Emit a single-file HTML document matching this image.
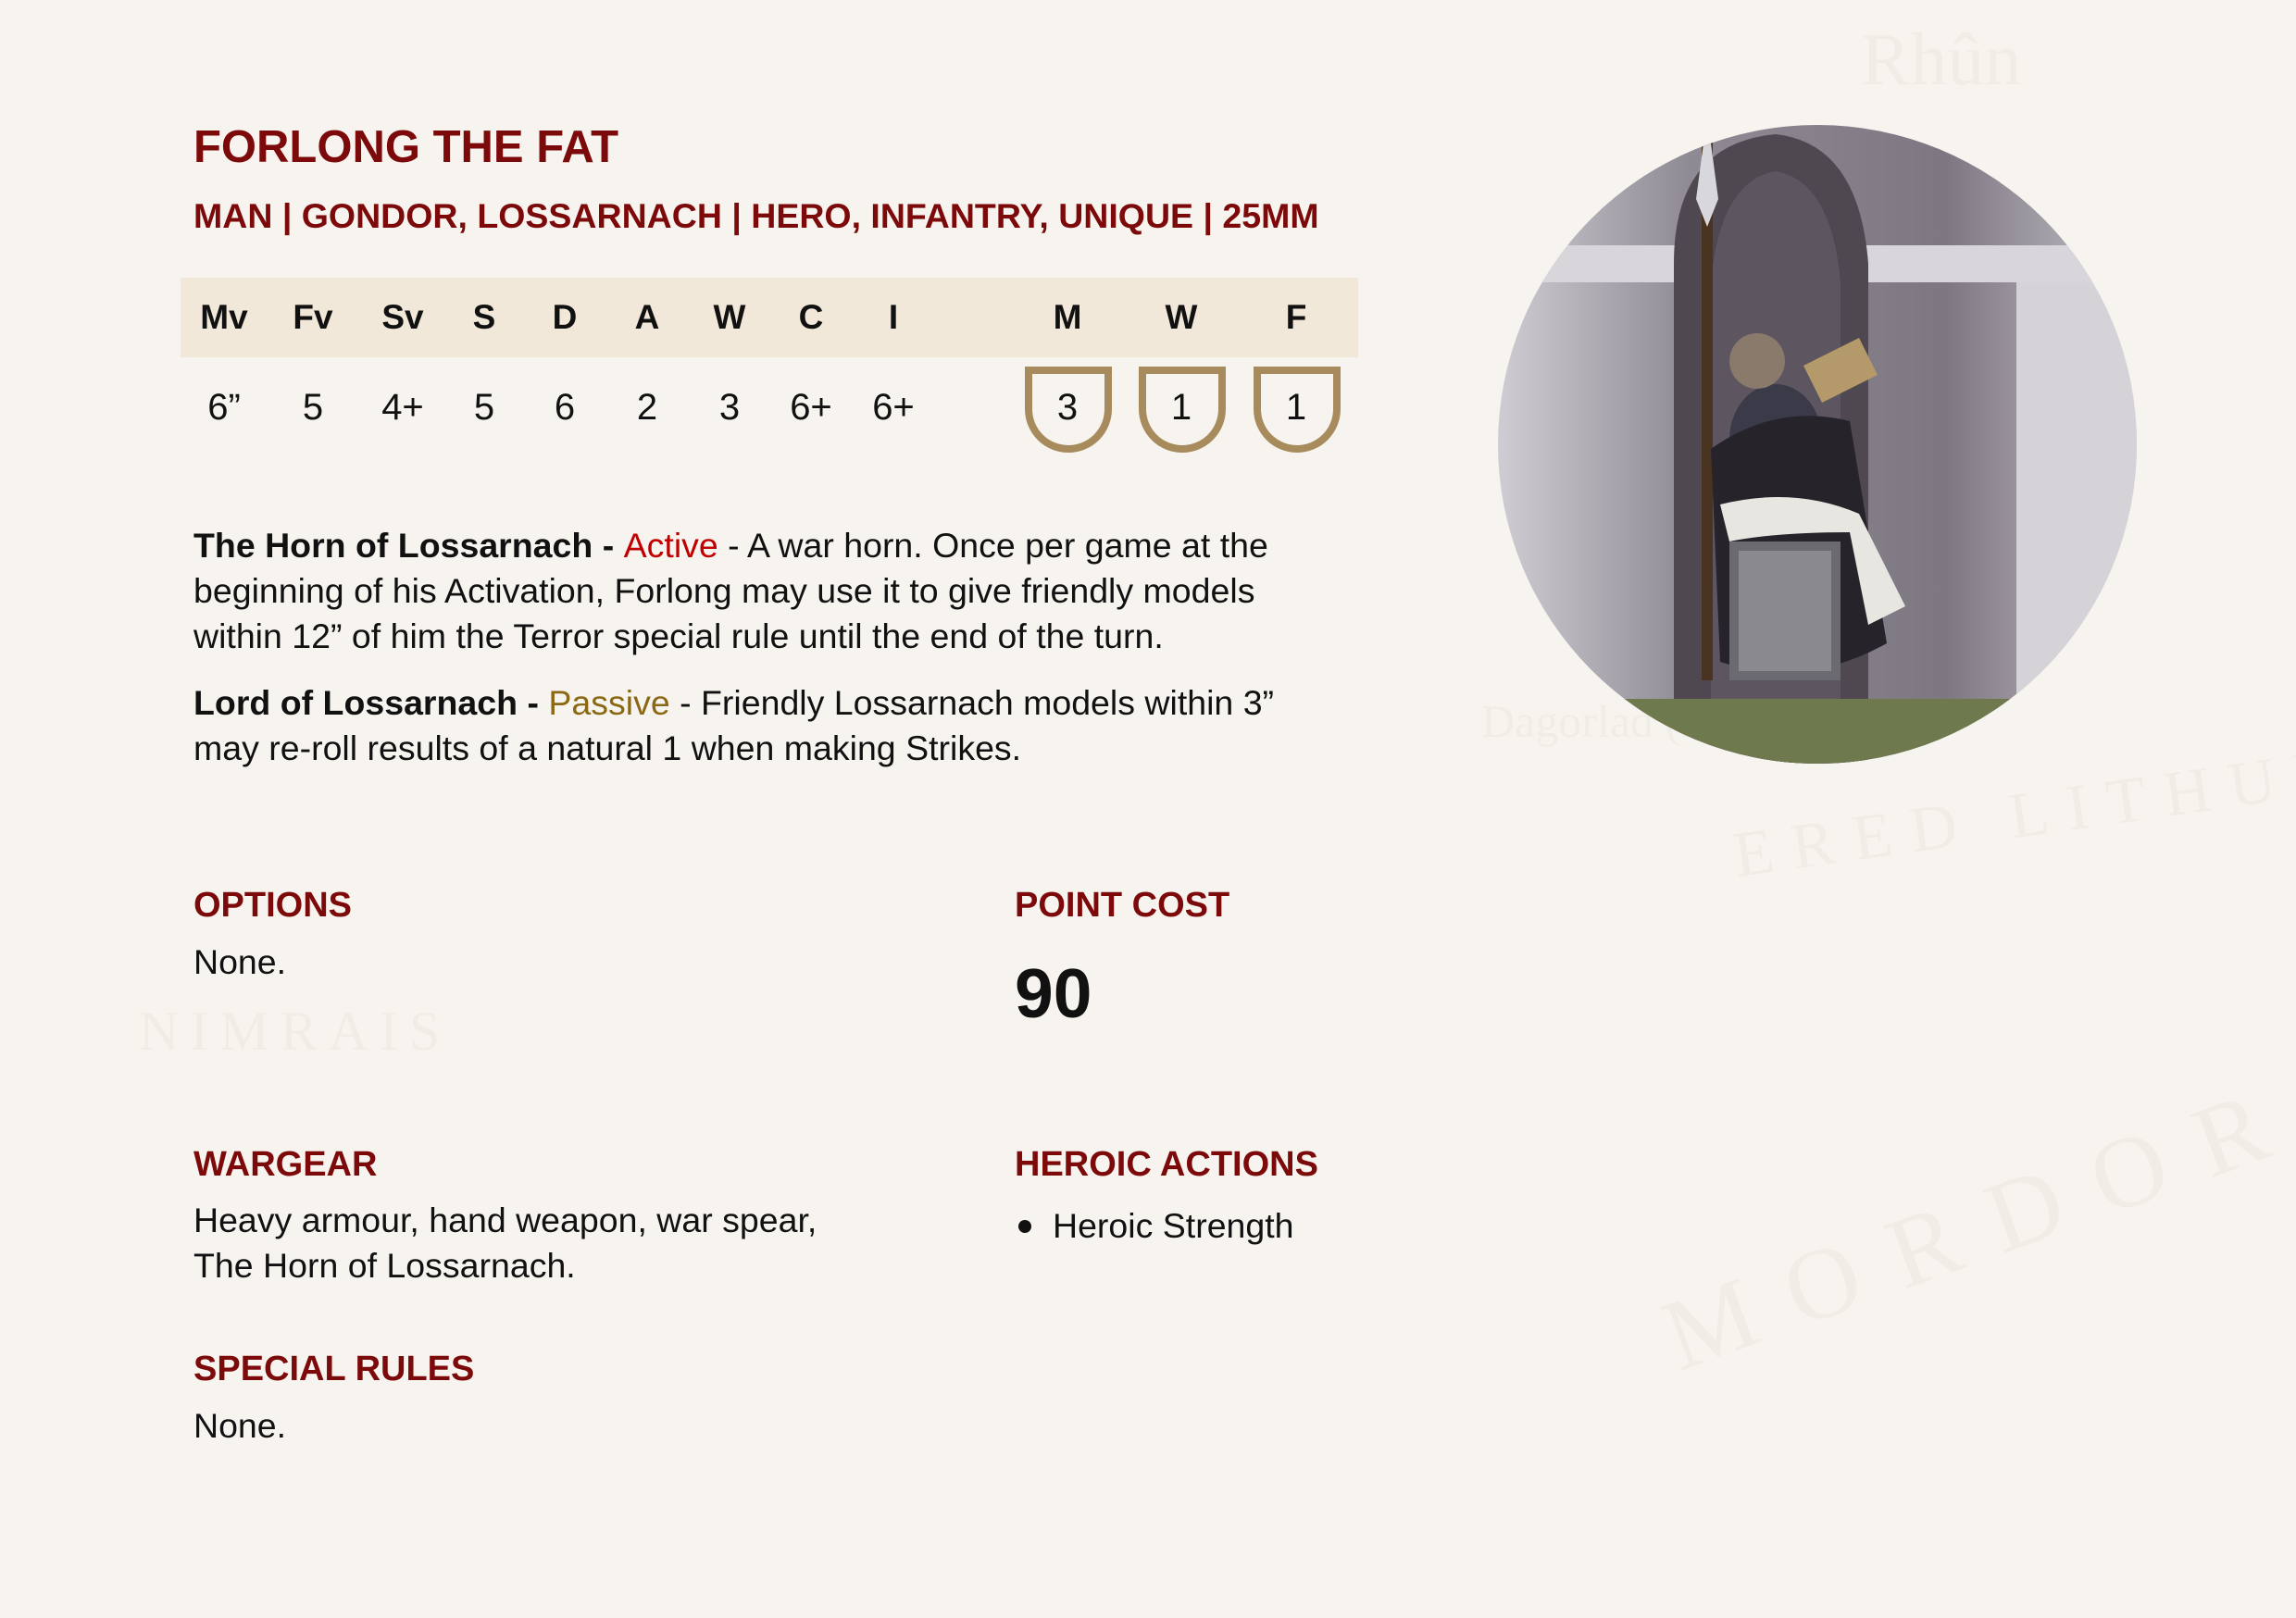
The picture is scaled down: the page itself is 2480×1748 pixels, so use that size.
<!DOCTYPE html>
<html><head><meta charset="utf-8"><style>
html,body{margin:0;padding:0}
body{width:2480px;height:1748px;background:#f7f4ef;position:relative;overflow:hidden;font-family:"Liberation Sans",Arial,sans-serif;color:#111}
.a{position:absolute;white-space:nowrap;line-height:1.15}
.h{color:#7d0a0a;font-weight:bold;font-size:38px}
.b{font-size:37.5px}
.hd{position:absolute;top:322px;font-size:37px;font-weight:bold;width:120px;text-align:center;margin-left:-60px;line-height:1.15}
.v{position:absolute;top:417px;font-size:40px;width:120px;text-align:center;margin-left:-60px;line-height:1.15}
.map{position:absolute;color:rgba(120,100,80,0.05);font-family:"Liberation Serif",serif;white-space:nowrap}
</style></head><body>
<div class="map" style="left:2010px;top:20px;font-size:80px">Rhûn</div>
<div class="map" style="left:1870px;top:840px;font-size:70px;letter-spacing:20px;transform:rotate(-8deg)">ERED LITHUI</div>
<div class="map" style="left:1780px;top:1260px;font-size:110px;letter-spacing:40px;transform:rotate(-20deg)">MORDOR</div>
<div class="map" style="left:150px;top:1080px;font-size:60px;letter-spacing:12px">NIMRAIS</div>
<div class="map" style="left:1600px;top:750px;font-size:50px">Dagorlad (Battle Plain)</div>

<div class="a" style="left:209px;top:131px;font-size:49px;font-weight:bold;color:#7d0a0a">FORLONG THE FAT</div>
<div class="a" style="left:209px;top:212px;font-size:37.5px;font-weight:bold;color:#7d0a0a">MAN | GONDOR, LOSSARNACH | HERO, INFANTRY, UNIQUE | 25MM</div>

<div style="position:absolute;left:195px;top:300px;width:1272px;height:86px;background:#f2e8da"></div>
<div class="hd" style="left:242px">Mv</div><div class="hd" style="left:338px">Fv</div><div class="hd" style="left:435px">Sv</div>
<div class="hd" style="left:523px">S</div><div class="hd" style="left:610px">D</div><div class="hd" style="left:699px">A</div>
<div class="hd" style="left:788px">W</div><div class="hd" style="left:876px">C</div><div class="hd" style="left:965px">I</div>
<div class="hd" style="left:1153px">M</div><div class="hd" style="left:1276px">W</div><div class="hd" style="left:1400px">F</div>

<svg style="position:absolute;left:0;top:0" width="2480" height="600">
<g fill="none" stroke="#a88b5c" stroke-width="8">
<path d="M1111 400 H1197 V442 A43 43 0 0 1 1111 442 Z"/>
<path d="M1234 400 H1320 V442 A43 43 0 0 1 1234 442 Z"/>
<path d="M1358 400 H1444 V442 A43 43 0 0 1 1358 442 Z"/>
</g></svg>
<div class="v" style="left:242px">6”</div><div class="v" style="left:338px">5</div><div class="v" style="left:435px">4+</div>
<div class="v" style="left:523px">5</div><div class="v" style="left:610px">6</div><div class="v" style="left:699px">2</div>
<div class="v" style="left:788px">3</div><div class="v" style="left:876px">6+</div><div class="v" style="left:965px">6+</div>
<div class="v" style="left:1153px">3</div><div class="v" style="left:1276px">1</div><div class="v" style="left:1400px">1</div>

<div class="a b" style="left:209px;top:565px;line-height:49px"><b>The Horn of Lossarnach - </b><span style="color:#c00000">Active</span> - A war horn. Once per game at the<br>beginning of his Activation, Forlong may use it to give friendly models<br>within 12” of him the Terror special rule until the end of the turn.</div>
<div class="a b" style="left:209px;top:735px;line-height:49px"><b>Lord of Lossarnach - </b><span style="color:#8b6914">Passive</span> - Friendly Lossarnach models within 3”<br>may re-roll results of a natural 1 when making Strikes.</div>

<div class="a h" style="left:209px;top:957px">OPTIONS</div>
<div class="a b" style="left:209px;top:1018px">None.</div>
<div class="a h" style="left:1096px;top:957px">POINT COST</div>
<div class="a" style="left:1096px;top:1030px;font-size:75px;font-weight:bold">90</div>

<div class="a h" style="left:209px;top:1237px">WARGEAR</div>
<div class="a b" style="left:209px;top:1294px;line-height:49px">Heavy armour, hand weapon, war spear,<br>The Horn of Lossarnach.</div>
<div class="a h" style="left:1096px;top:1237px">HEROIC ACTIONS</div>
<div style="position:absolute;left:1100px;top:1318px;width:14px;height:14px;border-radius:50%;background:#111"></div>
<div class="a b" style="left:1137px;top:1303px">Heroic Strength</div>

<div class="a h" style="left:209px;top:1458px">SPECIAL RULES</div>
<div class="a b" style="left:209px;top:1519px">None.</div>

<svg style="position:absolute;left:1618px;top:135px" width="690" height="690">
<defs><clipPath id="c"><circle cx="345" cy="345" r="345"/></clipPath>
<linearGradient id="st" x1="0" y1="0" x2="1" y2="0"><stop offset="0" stop-color="#cfcdd3"/><stop offset="0.3" stop-color="#8f8a94"/><stop offset="0.7" stop-color="#7d7782"/><stop offset="1" stop-color="#c4c1c7"/></linearGradient></defs>
<g clip-path="url(#c)">
<rect width="690" height="690" fill="url(#st)"/>
<rect x="0" y="130" width="690" height="40" fill="#d8d6da"/>
<rect x="560" y="170" width="130" height="520" fill="#d5d3d8"/>
<path d="M190 690 V150 Q190 20 300 10 Q390 20 400 150 V690 Z" fill="#4f4850"/>
<path d="M230 690 V170 Q240 60 300 50 Q360 60 370 170 V690 Z" fill="#5d5560"/>
<rect x="220" y="0" width="12" height="600" fill="#4a3320"/>
<path d="M226 -10 L214 80 L226 110 L238 80 Z" fill="#d8d8dc"/>
<ellipse cx="300" cy="340" rx="50" ry="60" fill="#3a3a48"/>
<circle cx="280" cy="255" r="30" fill="#8a7a6c"/>
<path d="M230 350 Q300 300 380 320 L420 560 Q330 610 240 580 Z" fill="#26232b"/>
<path d="M240 410 Q320 390 390 420 L440 520 L400 540 L380 440 Q300 440 250 450 Z" fill="#e8e6e0"/>
<rect x="250" y="450" width="120" height="150" fill="#6b6a70"/>
<rect x="260" y="460" width="100" height="130" fill="#9f9ea4" opacity="0.6"/>
<path d="M330 260 L390 230 L410 270 L350 300 Z" fill="#b49a6a"/>
<rect x="0" y="620" width="690" height="70" fill="#6e7a4e"/>
</g></svg>
</body></html>
